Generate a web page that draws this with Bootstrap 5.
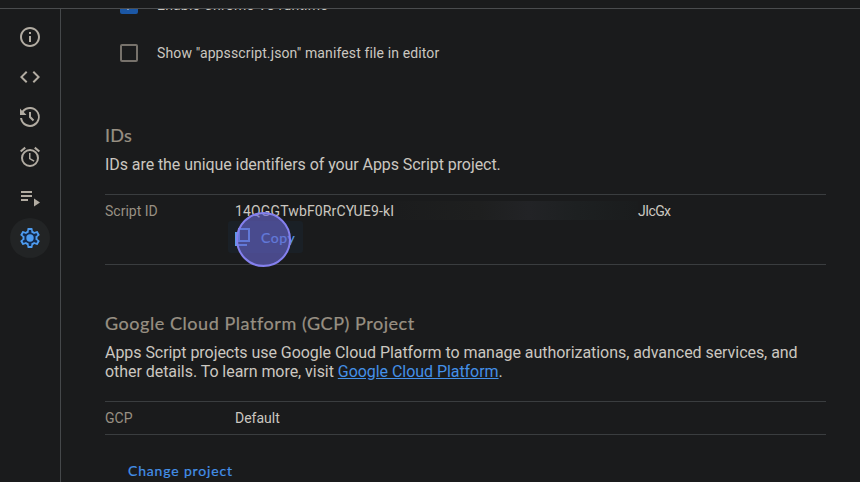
<!DOCTYPE html>
<html lang="en" data-bs-theme="dark">
<head>
<meta charset="utf-8">
<meta name="viewport" content="width=device-width, initial-scale=1">
<title>Project Settings</title>
<link href="https://cdn.jsdelivr.net/npm/bootstrap@5.3.0/dist/css/bootstrap.min.css" rel="stylesheet">
<style>
body{background:#1a1b1c;color:#cbc7c0;font-family:Roboto,"Liberation Sans",sans-serif;font-size:14px;line-height:20px}
.topline{height:9px;border-bottom:1px solid #4a4c4e}
.side{width:61px;border-right:1px solid #45484a;padding-top:8px}
.side a{width:40px;height:40px;color:#b2aca2;margin-bottom:.15px}
.side a.active{background:#222425;color:#4d9bef}
.side svg{width:24px;height:24px;fill:currentColor}
.settings{padding-left:44px}
.inner{width:721px}
.options{margin-top:-28px;padding-left:15px}
.option{height:48px;gap:19px}
.form-check-input.box{width:18px;height:18px;margin:0;border:2px solid #77726b;border-radius:2px;background-color:transparent;background-size:20px;flex:none}
.form-check-input.box:checked{background-color:#1b57a5;border-color:#1b57a5}
.option label{letter-spacing:.125px}
.option:first-child label{letter-spacing:.19px}
h2{font-family:Lato,"Open Sans",sans-serif;font-size:18px;line-height:24px;font-weight:400;color:#989083;-webkit-text-stroke:.22px #989083;letter-spacing:.2px}
.gcphead{letter-spacing:.55px}
.ids{margin-top:46px}
.desc{font-size:16px;line-height:19px;letter-spacing:-.05px}
.ids .desc{letter-spacing:-.07px}
.field{border-top:1px solid #3a3d3f;border-bottom:1px solid #3a3d3f}
.field dt{width:130px;font-weight:400;color:#989083}
.idrow{height:71px;padding-top:6px;margin-top:20px}
.idstart{letter-spacing:.14px}
.idend{letter-spacing:-.6px}
.hidden-id{width:244px;height:19px;background:linear-gradient(90deg,#1b1c1d,#1e1f1f 35%,#222326 55%,#1d2021 75%,#1a1c1d)}
.copy{width:75px;height:32px;margin:0 0 0 -7px;background:#1a2026;color:#5b9ae8;padding:0 0 0 6px;border-radius:3px;gap:9px}
.action{font-family:Lato,"Open Sans",sans-serif;font-size:14px;font-weight:400;-webkit-text-stroke:.2px currentColor;letter-spacing:.6px}
.copy svg{width:18px;height:18px;fill:currentColor}
.pointer{width:55px;height:55px;left:1px;top:-9px;border:2px solid #8480ee;background:rgba(103,101,206,.62)}
.gcp{margin-top:46px}
.gcprow{height:34px;margin-top:20px}
.desc a{color:#4490e8}
.change{color:#4490e8;margin:25px 0 0 23px;letter-spacing:.83px}
</style>
</head>
<body class="vh-100 overflow-hidden d-flex flex-column">
<header class="topline flex-shrink-0"></header>
<div class="d-flex flex-grow-1 overflow-hidden">
<nav class="side nav flex-column flex-nowrap align-items-center flex-shrink-0" aria-label="Project">
<a href="#" class="d-flex align-items-center justify-content-center rounded-circle" aria-label="Overview"><svg viewBox="0 0 24 24"><path d="M11 7h2v2h-2zm0 4h2v6h-2zm1-9C6.48 2 2 6.48 2 12s4.48 10 10 10 10-4.48 10-10S17.520 2 12 2zm0 18c-4.41 0-8-3.590-8-8s3.590-8 8-8 8 3.590 8 8-3.590 8-8 8z"/></svg></a>
<a href="#" class="d-flex align-items-center justify-content-center rounded-circle" aria-label="Editor"><svg viewBox="0 0 24 24"><path d="M9.400 16.600 4.800 12l4.600-4.600L8 6l-6 6 6 6zm5.200 0 4.600-4.600-4.600-4.600L16 6l6 6-6 6z"/></svg></a>
<a href="#" class="d-flex align-items-center justify-content-center rounded-circle" aria-label="Project History"><svg viewBox="0 0 24 24"><path d="M12 22c-5.100 0-9.400-3.900-9.950-9H4.070A8 8 0 1 0 5.700 7L8.500 10H2V3.500l2 2.200A10 10 0 1 1 12 22zm2.800-5.800L11 12.400V7h2v4.600l3.200 3.200z"/></svg></a>
<a href="#" class="d-flex align-items-center justify-content-center rounded-circle" aria-label="Triggers"><svg viewBox="0 0 24 24"><path d="m22 5.720-4.600-3.860-1.290 1.530 4.600 3.860zM7.880 3.390 6.600 1.860 2 5.710l1.290 1.530zM12.500 8H11v6l4.750 2.850.75-1.230-4-2.370zM12 4a9 9 0 1 0 0 18 9 9 0 0 0 0-18zm0 16a7 7 0 1 1 0-14 7 7 0 0 1 0 14z"/></svg></a>
<a href="#" class="d-flex align-items-center justify-content-center rounded-circle" aria-label="Executions"><svg viewBox="0 0 24 24"><path d="M3 5h11v2H3zm0 4h11v2H3zm0 4h7v2H3zM16 12.500v8l6-4z"/></svg></a>
<a href="#" class="active d-flex align-items-center justify-content-center rounded-circle" aria-label="Project Settings"><svg viewBox="0 0 24 24"><path d="M19.430 12.980c.04-.32.07-.64.07-.98s-.03-.66-.07-.98l2.110-1.650c.19-.15.24-.42.12-.64l-2-3.460c-.12-.22-.39-.3-.61-.22l-2.490 1c-.52-.4-1.080-.73-1.690-.98l-.38-2.650A.49.49 0 0 0 14 2h-4c-.25 0-.46.18-.49.42l-.38 2.650c-.61.25-1.170.59-1.690.98l-2.490-1c-.23-.09-.49 0-.61.22l-2 3.460c-.13.22-.07.49.12.64l2.110 1.650c-.04.32-.07.65-.07.98s.03.66.07.98l-2.110 1.650c-.19.15-.24.42-.12.64l2 3.460c.12.22.39.3.61.22l2.490-1c.52.4 1.080.73 1.690.98l.38 2.650c.03.24.24.42.49.42h4c.25 0 .46-.18.49-.42l.38-2.650c.61-.25 1.170-.59 1.690-.98l2.490 1c.23.09.49 0 .61-.22l2-3.460c.12-.22.07-.49-.12-.64z"/><path fill="#13294a" d="m13.100 4 .4 2.700 1.300.5 1.200.8 2.400-1 1.100 1.900-2.100 1.600.2 1.500-.2 1.500 2.100 1.600-1.100 1.900-2.400-1-1.200.8-1.300.5-.4 2.700h-2.200l-.4-2.700-1.300-.5-1.200-.8-2.400 1-1.100-1.900 2.100-1.600-.2-1.500.2-1.500-2.100-1.600 1.100-1.900 2.400 1 1.200-.8 1.300-.5.4-2.700z"/><circle cx="12" cy="12" r="3.700"/></svg></a>
</nav>
<main class="settings flex-grow-1 overflow-hidden">
<div class="inner">
<div class="options">
<div class="option d-flex align-items-center"><input id="v8" class="form-check-input box" type="checkbox" checked><label for="v8">Enable Chrome V8 runtime</label></div>
<div class="option d-flex align-items-center"><input id="manifest" class="form-check-input box" type="checkbox"><label for="manifest">Show "appsscript.json" manifest file in editor</label></div>
</div>
<section class="ids">
<h2 class="mb-2">IDs</h2>
<p class="desc mb-0">IDs are the unique identifiers of your Apps Script project.</p>
<dl class="field idrow d-flex mb-0">
<dt>Script ID</dt>
<dd class="mb-0">
<div class="d-flex"><span class="idstart">14QGGTwbF0RrCYUE9-kI</span><span class="hidden-id"></span><span class="idend">JIcGx</span></div>
<div class="position-relative"><button class="copy action btn border-0 d-flex align-items-center"><svg viewBox="0 0 18 18"><path d="M4 0h12v14H4zm2 2v10h8V2zM1 4h2v12h10v2H1z" fill-rule="evenodd"/></svg>Copy</button><span class="pointer position-absolute rounded-circle"></span></div>
</dd>
</dl>
</section>
<section class="gcp">
<h2 class="gcphead mb-2">Google Cloud Platform (GCP) Project</h2>
<p class="desc mb-0">Apps Script projects use Google Cloud Platform to manage authorizations, advanced services, and<br>other details. To learn more, visit <a href="#">Google Cloud Platform</a>.</p>
<dl class="field gcprow d-flex align-items-center mb-0"><dt>GCP</dt><dd class="mb-0">Default</dd></dl>
<button class="change action btn border-0 p-0">Change project</button>
</section>
</div>
</main>
</div>
<script src="https://cdn.jsdelivr.net/npm/bootstrap@5.3.0/dist/js/bootstrap.bundle.min.js"></script>
</body>
</html>
